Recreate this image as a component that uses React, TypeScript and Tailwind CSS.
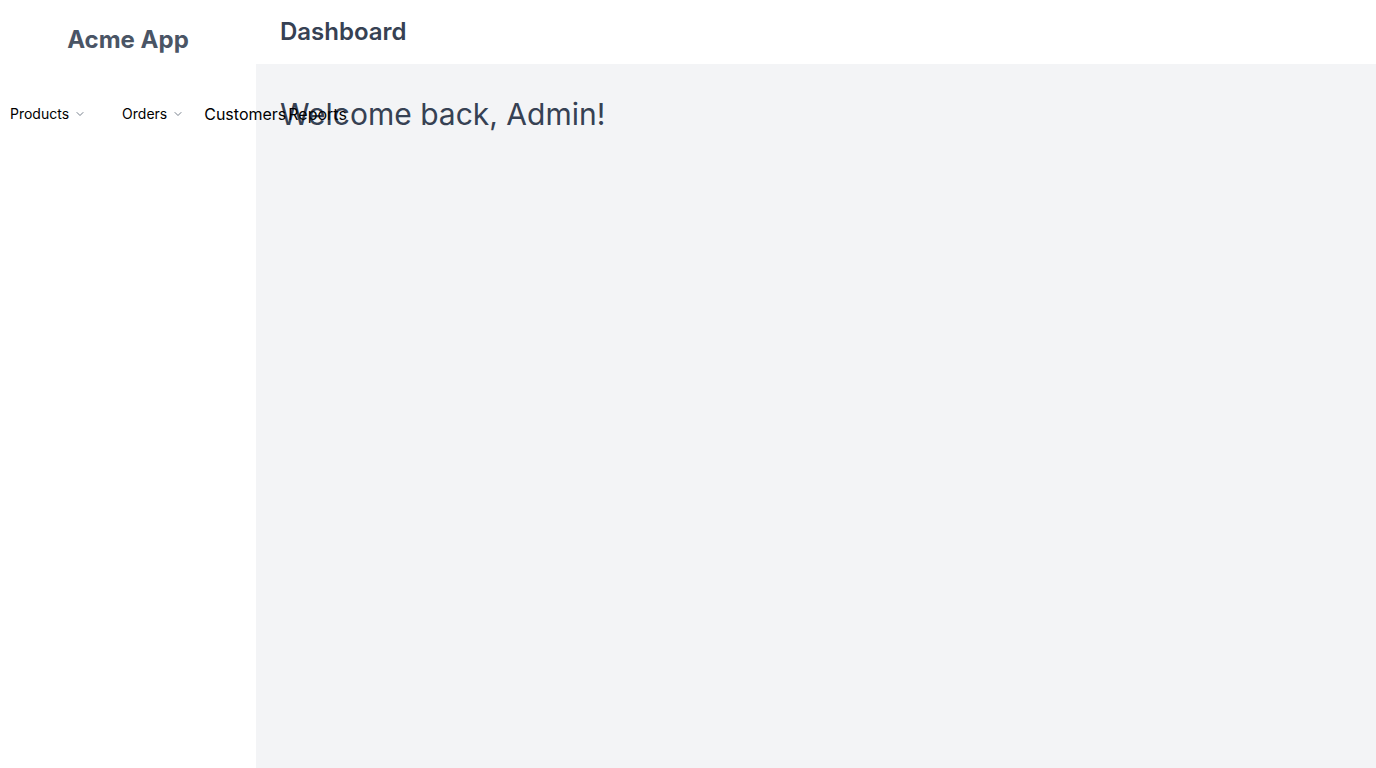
import { ChevronDown } from "lucide-react";

const font = { fontFamily: "Inter, 'Noto Sans', sans-serif" };

function MenuTrigger({ label, className }: { label: string; className?: string }) {
  return (
    <button className={`flex items-center text-sm text-black ${className ?? ""}`}>
      <span>{label}</span>
      <ChevronDown size={12} strokeWidth={1.5} className="ml-[5px] text-gray-600" />
    </button>
  );
}

export default function App() {
  return (
    <div className="flex h-screen w-full bg-white" style={font}>
      <aside className="relative z-10 w-64 shrink-0 bg-white">
        <div className="flex h-20 items-center justify-center">
          <span className="text-2xl font-bold text-gray-600">Acme App</span>
        </div>
        <nav className="flex h-[68px] items-center whitespace-nowrap pb-[1px]">
          <MenuTrigger label="Products" className="ml-[10px]" />
          <MenuTrigger label="Orders" className="ml-[36px]" />
          <a className="ml-5 text-base text-black">Customers</a>
          <a className="ml-[2px] text-base text-black">Reports</a>
        </nav>
      </aside>

      <div className="flex min-w-0 flex-1 flex-col">
        <header className="flex h-16 shrink-0 items-center bg-white px-6">
          <h1 className="text-2xl font-semibold text-gray-700">Dashboard</h1>
        </header>
        <main className="flex-1 bg-gray-100 px-6 pt-8">
          <h2 className="text-3xl text-gray-700">Welcome back, Admin!</h2>
        </main>
      </div>
    </div>
  );
}
